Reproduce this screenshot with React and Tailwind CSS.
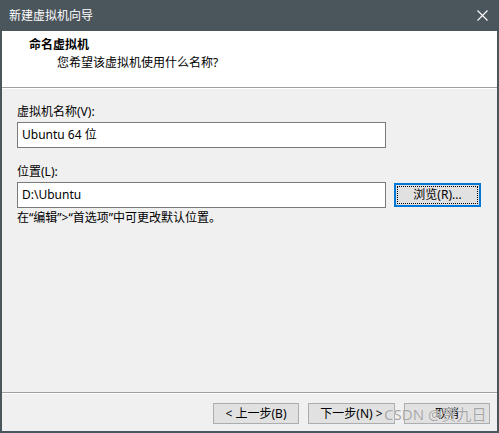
export default function App() {
  const font = "font-['Noto_Sans','Noto_Sans_CJK_SC',sans-serif]";

  return (
    <div className={`relative flex h-[433px] w-[499px] flex-col bg-[#4b555c] text-[12px] leading-[16px] text-black ${font}`}>
      {/* Title bar */}
      <div className="flex h-[31px] shrink-0 items-center justify-between pl-[9px] pr-[11px] text-white">
        <span className="leading-[16px]">新建虚拟机向导</span>
        <svg width="11" height="11" viewBox="0 0 11 11" aria-hidden>
          <path d="M0.5 0.5 L10.5 10.5 M10.5 0.5 L0.5 10.5" stroke="#ffffff" strokeWidth="1.1" />
        </svg>
      </div>

      {/* Window body */}
      <div className="mx-[2px] mb-[2px] flex flex-1 flex-col bg-[#f0f0f0]">
        {/* Header */}
        <div className="flex h-[56px] shrink-0 flex-col bg-white pl-[27px] pt-[6px]">
          <span className="font-bold leading-[16px]">命名虚拟机</span>
          <span className="mt-[2px] pl-[28px] leading-[16px]">您希望该虚拟机使用什么名称?</span>
        </div>
        <div className="h-px bg-[#a0a0a0]" />
        <div className="h-px bg-white" />

        {/* Form */}
        <div className="flex flex-1 flex-col pl-[15px] pt-[15px]">
          <label className="leading-[16px]">虚拟机名称(V):</label>
          <div className="mt-[2px] flex h-[26px] w-[369px] items-center border border-[#7a7a7a] bg-white pl-[4px]">
            Ubuntu 64 位
          </div>

          <label className="mt-[16px] leading-[16px]">位置(L):</label>
          <div className="mt-[2px] flex items-center">
            <div className="flex h-[26px] w-[369px] items-center border border-[#7a7a7a] bg-white pl-[4px]">
              D:\Ubuntu
            </div>
            <button className="ml-[8px] flex h-[24px] w-[87px] items-center justify-center border-2 border-[#0078d7] bg-[#e1e1e1] p-px">
              <span className="flex h-full w-full items-center justify-center border border-dotted border-black">
                浏览(R)...
              </span>
            </button>
          </div>

          <p className="mt-[2px] leading-[16px]">在“编辑”&gt;“首选项”中可更改默认位置。</p>
        </div>

        {/* Footer */}
        <div className="h-px bg-[#a0a0a0]" />
        <div className="h-px bg-white" />
        <div className="flex h-[37px] shrink-0 justify-end gap-[9px] pr-[7px] pt-[9px]">
          <button className="flex h-[21px] w-[86px] items-center justify-center border border-[#adadad] bg-[#e1e1e1]">
            &lt; 上一步(B)
          </button>
          <button className="flex h-[21px] w-[87px] items-center justify-center border border-[#adadad] bg-[#e1e1e1]">
            下一步(N) &gt;
          </button>
          <button className="flex h-[21px] w-[86px] items-center justify-center border border-[#adadad] bg-[#e1e1e1]">
            取消
          </button>
        </div>
      </div>

      {/* Watermark */}
      <span className="pointer-events-none absolute left-[384px] top-[404px] text-[15px] leading-[20px] text-[#a6a6a6] [text-shadow:0_0_1px_#ffffff]">
        CSDN @贾九日
      </span>
    </div>
  );
}
